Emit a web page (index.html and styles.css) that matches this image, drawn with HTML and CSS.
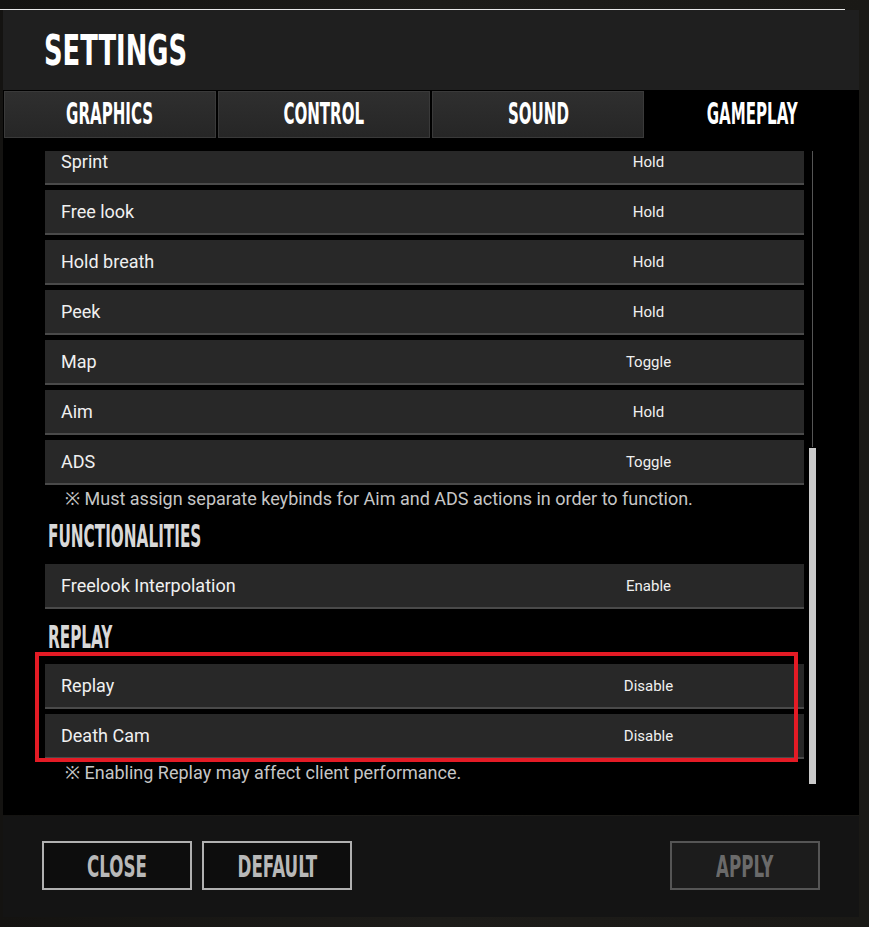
FILE: index.html
```html
<!DOCTYPE html>
<html>
<head>
<meta charset="utf-8">
<link rel="stylesheet" href="styles.css">
</head>
<body>
<div class="topline"></div>
<div class="panel">
  <div class="header"><span class="cond title">SETTINGS</span></div>
  <div class="tabs">
    <div class="tab"><span class="cond tabtxt">GRAPHICS</span></div>
    <div class="tab"><span class="cond tabtxt">CONTROL</span></div>
    <div class="tab"><span class="cond tabtxt">SOUND</span></div>
    <div class="tab active"><span class="cond tabtxt">GAMEPLAY</span></div>
  </div>
  <div class="content">
    <div class="viewport">
      <div class="list">
        <div class="row"><span class="label">Sprint</span><span class="value">Hold</span></div>
        <div class="row"><span class="label">Free look</span><span class="value">Hold</span></div>
        <div class="row"><span class="label">Hold breath</span><span class="value">Hold</span></div>
        <div class="row"><span class="label">Peek</span><span class="value">Hold</span></div>
        <div class="row"><span class="label">Map</span><span class="value">Toggle</span></div>
        <div class="row"><span class="label">Aim</span><span class="value">Hold</span></div>
        <div class="row"><span class="label">ADS</span><span class="value">Toggle</span></div>
        <div class="note">※ Must assign separate keybinds for Aim and ADS actions in order to function.</div>
        <div class="heading"><span class="cond headtxt">FUNCTIONALITIES</span></div>
        <div class="row"><span class="label">Freelook Interpolation</span><span class="value">Enable</span></div>
        <div class="heading"><span class="cond headtxt">REPLAY</span></div>
        <div class="highlight">
          <div class="row"><span class="label">Replay</span><span class="value">Disable</span></div>
          <div class="row"><span class="label">Death Cam</span><span class="value">Disable</span></div>
        </div>
        <div class="note last">※ Enabling Replay may affect client performance.</div>
      </div>
    </div>
    <div class="scrollbar"><div class="track"></div><div class="thumb"></div></div>
  </div>
  <div class="footer">
    <div class="btn"><span class="cond btntxt">CLOSE</span></div>
    <div class="btn"><span class="cond btntxt">DEFAULT</span></div>
    <div class="spacer"></div>
    <div class="btn disabled"><span class="cond btntxt">APPLY</span></div>
  </div>
</div>
</body>
</html>
```

FILE: styles.css
```css
html, body {
  margin: 0;
  padding: 0;
}
body {
  width: 869px;
  height: 927px;
  overflow: hidden;
  background: linear-gradient(90deg, #141311 0%, #1d1c19 50%, #1a1916 100%);
  font-family: Roboto, "Noto Sans", sans-serif;
}
.topline {
  height: 10px;
  border-bottom: 1px solid #e8e8e8;
  margin-right: 24px;
  box-sizing: border-box;
}
.panel {
  margin-left: 3px;
  width: 856px;
}
.cond {
  display: inline-block;
  font-family: "Liberation Sans Narrow", "DejaVu Sans Condensed", "Liberation Sans", sans-serif;
  font-weight: bold;
  transform-origin: center center;
  white-space: nowrap;
}
.header {
  height: 80px;
  background: #1f1f1f;
  display: flex;
  align-items: center;
  padding-left: 41px;
}
.title {
  color: #fff;
  font-size: 43px;
  transform: scaleX(0.667);
  transform-origin: left center;
}
.tabs {
  height: 49px;
  background: #000;
  display: flex;
  gap: 2px;
  padding: 1px 0 0 1px;
  box-sizing: border-box;
}
.tab {
  width: 212px;
  height: 47px;
  background: linear-gradient(#2f2f2f, #262626);
  border: 1px solid #3a3a3a;
  box-sizing: border-box;
  display: flex;
  align-items: center;
  justify-content: center;
  padding-bottom: 4px;
}
.tab:nth-child(4) {
  width: 213px;
}
.tab.active {
  background: #000;
  border-color: #000;
}
.tabtxt {
  color: #fff;
  font-size: 31px;
  transform: scaleX(0.54);
}
.content {
  height: 676px;
  background: #000;
  display: flex;
  padding-top: 12px;
  box-sizing: border-box;
}
.viewport {
  width: 801px;
  height: 640px;
  padding-left: 42px;
  box-sizing: border-box;
  overflow: hidden;
}
.list {
  margin-top: -11px;
}
.row {
  height: 45px;
  background: #282828;
  border-bottom: 2px solid #4a4a4a;
  box-sizing: border-box;
  display: flex;
  align-items: center;
  margin-bottom: 5px;
  color: #f0f0f0;
}
.label {
  padding-left: 16px;
  font-size: 18px;
  width: 545px;
}
.value {
  width: 85px;
  text-align: center;
  font-size: 15px;
}
.note {
  color: #c6c6c6;
  font-size: 18px;
  padding-left: 20px;
  margin-top: -5px;
  height: 28px;
  line-height: 28px;
}
.note.last {
  margin-top: 0;
}
.heading {
  height: 51px;
  display: flex;
  align-items: center;
  padding: 0 0 5px 3px;
  box-sizing: border-box;
}
.headtxt {
  color: #d8d8d8;
  font-size: 32px;
  transform: scaleX(0.53);
  transform-origin: left center;
}
.highlight {
  position: relative;
  margin-top: -1px;
}
.highlight::after {
  content: "";
  position: absolute;
  top: -12px;
  bottom: -3px;
  left: -10px;
  right: 6px;
  border: 4px solid #e41b25;
}
.highlight .row:last-child {
  margin-bottom: 0;
}
.scrollbar {
  width: 7px;
  margin-left: 5px;
  display: flex;
  flex-direction: column;
  align-items: center;
}
.track {
  width: 1px;
  height: 296px;
  background: #555;
}
.thumb {
  width: 7px;
  height: 336px;
  background: #cacaca;
  margin-top: 1px;
}
.footer {
  height: 101px;
  background: #141414;
  display: flex;
  align-items: flex-start;
  padding: 25px 0 0 39px;
  box-sizing: border-box;
  margin-top: 1px;
}
.btn {
  width: 150px;
  height: 49px;
  border: 2px solid #b0b0b0;
  background: #0d0d0d;
  box-sizing: border-box;
  display: flex;
  align-items: center;
  justify-content: center;
  margin-right: 10px;
}
.btntxt {
  color: #b8b8b8;
  font-size: 31px;
  transform: scaleX(0.6);
}
.spacer {
  flex: 1;
}
.btn.disabled {
  border-color: #555;
  background: #1c1c1c;
  margin-right: 39px;
}
.btn.disabled .btntxt {
  color: #6a6a6a;
}
```
